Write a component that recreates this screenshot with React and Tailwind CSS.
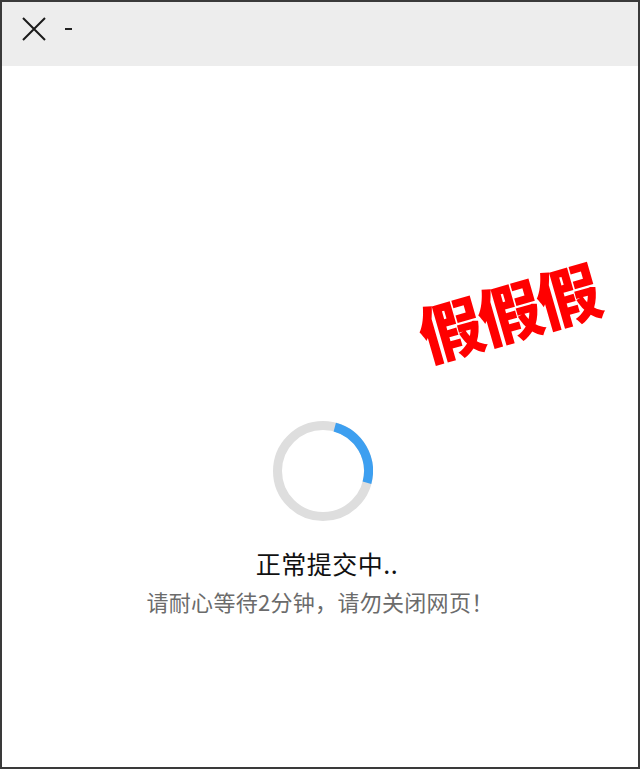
import React from 'react';

const Spinner = () => (
  <svg width="100" height="100" viewBox="0 0 100 100">
    <circle cx="50" cy="50" r="45.5" fill="none" stroke="#dedede" strokeWidth="9" />
    {/* blue arc from ~15deg to ~105deg clockwise from top */}
    <path
      d="M 61.78 6.05 A 45.5 45.5 0 0 1 93.95 61.78"
      fill="none"
      stroke="#3d9ff0"
      strokeWidth="9"
    />
  </svg>
);

const App = () => {
  return (
    <div
      className="relative flex h-[769px] w-[640px] flex-col overflow-hidden border-2 border-[#3a3a3a] bg-white"
      style={{ fontFamily: '"Noto Sans CJK SC", "Noto Sans", sans-serif' }}
    >
      <div className="flex h-[64px] shrink-0 items-center bg-[#ededed] pb-[10px] pl-[20px]">
        <svg width="24" height="24" viewBox="0 0 24 24" className="text-[#1a1a1a]">
          <path d="M1 1 L23 23 M23 1 L1 23" stroke="currentColor" strokeWidth="2" fill="none" />
        </svg>
        <span className="ml-[19px] block h-[2px] w-[7px] bg-[#222]" />
      </div>

      <div className="flex flex-1 flex-col items-center pt-[355px]">
        <div className="ml-[6px]">
          <Spinner />
        </div>
        <div className="mt-[26px] pl-[14px] text-[25px] leading-[32px] tracking-[0.5px] text-[#111]">
          正常提交中..
        </div>
        <div className="mt-[8px] text-[22px] leading-[28px] tracking-[0.3px] text-[#6b6b6b]">
          请耐心等待2分钟，请勿关闭网页！
        </div>
      </div>

      <div className="pointer-events-none absolute left-[414px] top-[276px] -rotate-[16deg] text-[64px] font-black leading-none tracking-[-3px] text-[#ff0000]">
        假假假
      </div>
    </div>
  );
};

export default App;
